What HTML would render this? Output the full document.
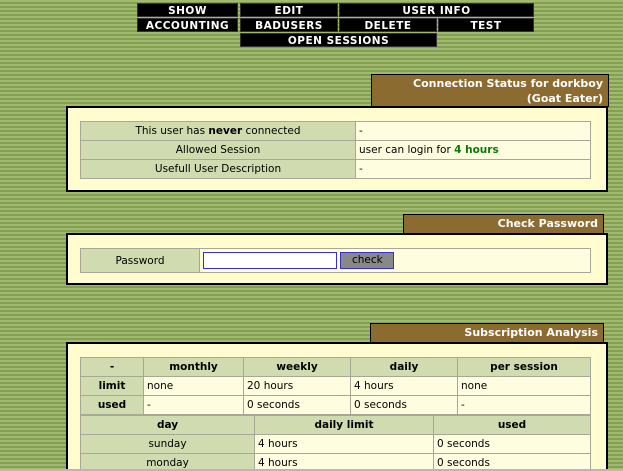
<!DOCTYPE html>
<html style="width:623px;height:471px;overflow:hidden"><head><style>
*{margin:0;padding:0;box-sizing:border-box}
body{width:623px;height:471px;overflow:hidden;position:relative;font-family:Verdana,"DejaVu Sans",sans-serif;font-size:10.5px;
background:repeating-linear-gradient(to bottom,#a2ba70 0,#a2ba70 2px,#83a052 2px,#83a052 4px);}
.a{position:absolute}
.n{position:absolute;background:#000;color:#fff;font-weight:bold;font-size:10.5px;text-align:center;height:14px;line-height:14px;letter-spacing:.5px;border:1px solid #333}
.h{position:absolute;background:#8b6b30;border:1px solid #000;color:#fff;font-weight:bold;font-size:11px;text-align:right;padding-right:5px;line-height:15px}
.box{position:absolute;background:#fffdd0;border:2px solid #000}
table{position:absolute;border-collapse:collapse;background:#fffde0}
td{border:1px solid #a8a898;height:19px;padding:0 3px;white-space:nowrap;font-size:10.5px}
.l{background:#d0dcb0;text-align:center}
.b{font-weight:bold}
</style></head><body>
<div class="n" style="left:137px;top:3px;width:101px">SHOW</div>
<div class="n" style="left:240px;top:3px;width:98px">EDIT</div>
<div class="n" style="left:339px;top:3px;width:195px">USER INFO</div>
<div class="n" style="left:137px;top:18px;width:101px">ACCOUNTING</div>
<div class="n" style="left:240px;top:18px;width:98px">BADUSERS</div>
<div class="n" style="left:339px;top:18px;width:98px">DELETE</div>
<div class="n" style="left:438px;top:18px;width:96px">TEST</div>
<div class="n" style="left:240px;top:33px;width:197px">OPEN SESSIONS</div>

<div class="h" style="left:371px;top:74px;width:238px;height:33px;padding-top:1px">Connection Status for dorkboy<br>(Goat Eater)</div>
<div class="box" style="left:66px;top:106px;width:542px;height:86px"></div>
<table style="left:80px;top:121px;width:511px">
<tr><td class="l" style="width:275px">This user has <b>never</b> connected</td><td>-</td></tr>
<tr><td class="l">Allowed Session</td><td>user can login for <b style="color:#0a7a0a">4 hours</b></td></tr>
<tr><td class="l">Usefull User Description</td><td>-</td></tr>
</table>

<div class="h" style="left:403px;top:214px;width:201px;height:20px;line-height:18px">Check Password</div>
<div class="box" style="left:66px;top:233px;width:542px;height:52px"></div>
<table style="left:80px;top:248px;width:511px">
<tr><td class="l" style="width:119px;height:24px">Password</td><td><span style="display:inline-block;width:134px;height:17px;background:#fff;border:1px solid #3333cc;vertical-align:middle"></span> <span style="display:inline-block;width:54px;height:17px;background:#888;border:1px solid #3333cc;vertical-align:middle;text-align:center;line-height:15px">check</span></td></tr>
</table>

<div class="h" style="left:370px;top:323px;width:234px;height:20px;line-height:18px">Subscription Analysis</div>
<div class="box" style="left:66px;top:342px;width:542px;height:129px;border-bottom:none"></div>
<table style="left:80px;top:357px;width:511px">
<tr><td class="l b" style="width:63px">-</td><td class="l b" style="width:100px">monthly</td><td class="l b" style="width:107px">weekly</td><td class="l b" style="width:107px">daily</td><td class="l b">per session</td></tr>
<tr><td class="l b">limit</td><td>none</td><td>20 hours</td><td>4 hours</td><td>none</td></tr>
<tr><td class="l b">used</td><td>-</td><td>0 seconds</td><td>0 seconds</td><td>-</td></tr>
</table>
<div class="a" style="left:80px;top:415px;width:511px;height:54px;overflow:hidden">
<table style="left:0;top:0;width:511px">
<tr><td class="l b" style="width:174px">day</td><td class="l b" style="width:179px">daily limit</td><td class="l b">used</td></tr>
<tr><td class="l">sunday</td><td>4 hours</td><td>0 seconds</td></tr>
<tr><td class="l">monday</td><td>4 hours</td><td>0 seconds</td></tr>
</table></div>
<div class="a" style="left:0;top:469px;width:623px;height:2px;background:#b8b8b0"></div>
</body></html>
